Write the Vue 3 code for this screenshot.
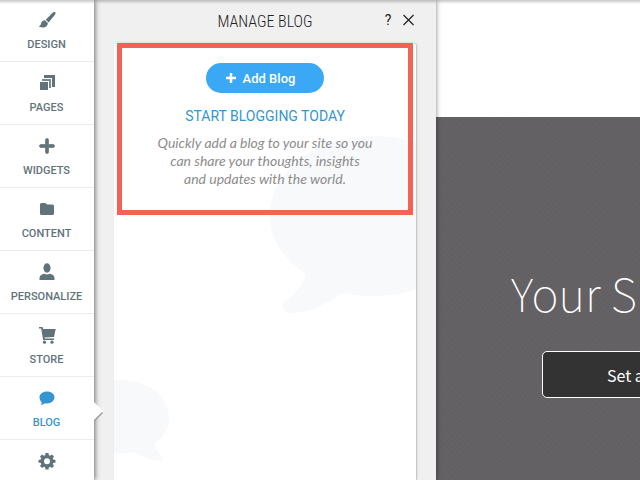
<script setup>
const items = [
  { id: 'design', label: 'DESIGN' },
  { id: 'pages', label: 'PAGES' },
  { id: 'widgets', label: 'WIDGETS' },
  { id: 'content', label: 'CONTENT' },
  { id: 'personalize', label: 'PERSONALIZE' },
  { id: 'store', label: 'STORE' },
  { id: 'blog', label: 'BLOG', active: true },
  { id: 'settings', label: '' },
]
</script>

<template>
  <div class="shell">
    <nav class="sidebar" aria-label="Editor">
      <a v-for="item in items" :key="item.id" href="#" class="nav-item" :class="{ active: item.active }" :aria-label="item.id">
        <svg class="nav-icon" viewBox="0 0 18 18" aria-hidden="true">
          <g v-if="item.id === 'design'">
            <path d="M16.900 1.100c.9.600.8 1.500.2 2.300L10.700 11.400 7.700 8.700l6.900-6.900c.8-.8 1.500-1.200 2.300-.7z" />
            <path d="M7.100 9.400l2.800 2.500c-.1 3.900-4.100 6-9.400 3.300 2.200-.4 2.200-1.900 2.700-3.300.6-1.700 2.200-2.700 3.900-2.500z" />
          </g>
          <g v-else-if="item.id === 'pages'">
            <path d="M2 8h8v8H2z" />
            <path d="M4 5h9v9h-2V7H4z" opacity=".85" />
            <path d="M6 1h11v12h-3V4H6z" />
          </g>
          <path v-else-if="item.id === 'widgets'" d="M7.500 3a1.500 1.500 0 0 1 3 0v4.500H15a1.500 1.500 0 0 1 0 3h-4.500V15a1.500 1.500 0 0 1-3 0v-4.500H3a1.500 1.500 0 0 1 0-3h4.500z" stroke="currentColor" stroke-width=".7" />
          <path v-else-if="item.id === 'content'" d="M2 4.500A1.500 1.500 0 0 1 3.500 3h3.700l2 1.500h5.300A1.500 1.500 0 0 1 16 6v7.500a1.500 1.500 0 0 1-1.500 1.500h-11A1.500 1.500 0 0 1 2 13.500z" />
          <g v-else-if="item.id === 'personalize'">
            <ellipse cx="9" cy="5" rx="3.600" ry="4.700" />
            <path d="M1.500 17v-2c0-2.600 2.400-3.900 5-4.300 1.600 1 3.400 1 5 0 2.600.4 5 1.700 5 4.300v2z" />
          </g>
          <g v-else-if="item.id === 'store'">
            <path d="M1 1h3.600l.7 1.900h12.400l-1.700 8-9.500.6.300 1H16v1.500H5.100L3.200 2.600H1z" />
            <circle cx="6.500" cy="16.200" r="1.600" />
            <circle cx="14" cy="16.200" r="1.600" />
          </g>
          <path v-else-if="item.id === 'blog'" d="M9 2.500c4.400 0 7.500 2.500 7.500 5.800S13.400 14.500 9 14.500c-.8 0-1.500 0-2.200-.2C5.600 15.300 4.300 15.800 2.500 15.800c.9-.7 1.200-1.600 1.200-2.600C2.300 12 1.500 10.400 1.500 8.500 1.500 5 4.600 2.500 9 2.500z" />
          <path v-else fill-rule="evenodd" d="M7.500 1h3l.4 2.300 1.200.5L14 2.500 16 4.500l-1.300 1.900.5 1.200 2.300.4v2.500l-2.300.4-.5 1.200L16 14l-2 2-1.900-1.300-1.200.5-.4 2.300h-3l-.4-2.300-1.200-.5L4 16l-2-2 1.300-1.900-.5-1.200L.5 10.500V8l2.300-.4.5-1.200L2 4.500l2-2 1.900 1.300 1.200-.5zM9 6.300a3 3 0 1 0 0 6 3 3 0 0 0 0-6z" />
        </svg>
        <span class="nav-label">{{ item.label }}</span>
        <svg v-if="item.active" class="pointer" viewBox="0 0 12 22" aria-hidden="true">
          <path d="M0 3l9 9-9 9" class="pointer-shade" />
          <path d="M0 1l9 9-9 9z" class="pointer-fill" />
        </svg>
      </a>
    </nav>

    <section class="panel">
      <header class="panel-head">
        <h1 class="panel-title">MANAGE BLOG</h1>
        <div class="panel-actions">
          <button type="button" class="icon-button help" aria-label="Help">?</button>
          <button type="button" class="icon-button" aria-label="Close">
            <svg class="close-icon" viewBox="0 0 12 12" aria-hidden="true"><path d="M1 1l10 10M11 1L1 11" /></svg>
          </button>
        </div>
      </header>
      <div class="card">
        <svg class="bubble bubble-large" viewBox="0 0 210 180" aria-hidden="true">
          <path d="M104 0c58 0 104 36 104 80s-46 80-104 80c-12 0-22-1-32-3-16 12-34 19-51 20-7 0-11-6-6-12 11-7 18-16 21-27C14 124 0 104 0 80 0 36 46 0 104 0z" />
        </svg>
        <svg class="bubble bubble-small" viewBox="0 0 104 82" aria-hidden="true">
          <path d="M48 0c30 0 50 16 50 37 0 11-5 20-15 27 1 5 4 8 8 12 3 3 1 5-3 5-9-1-17-4-24-9-5 1-10 1-16 1C20 73 0 57 0 37S20 0 48 0z" />
        </svg>
        <div class="callout">
          <button type="button" class="add-button">
            <svg class="add-icon" viewBox="0 0 12 12" aria-hidden="true"><path d="M6 1v10M1 6h10" /></svg>
            <span>Add Blog</span>
          </button>
          <h2 class="callout-title">START BLOGGING TODAY</h2>
          <p class="callout-text">Quickly add a blog to your site so you<br>can share your thoughts, insights<br>and updates with the world.</p>
        </div>
      </div>
    </section>

    <main class="preview">
      <div class="hero">
        <h2 class="hero-title">Your S</h2>
        <button type="button" class="hero-button">Set a</button>
      </div>
    </main>
  </div>
</template>

<style>
body {
  background: #fff;
}
</style>

<style scoped>
.shell {
  position: relative;
  display: flex;
  height: 100vh;
  overflow: hidden;
  font-family: Roboto, "Liberation Sans", sans-serif;
}
.shell::after {
  content: "";
  position: absolute;
  inset: 0 0 auto;
  z-index: 4;
  height: 4px;
  background: linear-gradient(rgba(0, 0, 0, 0.22), rgba(0, 0, 0, 0));
  pointer-events: none;
}
.sidebar {
  position: relative;
  z-index: 3;
  flex: none;
  width: 94px;
  background: #fff;
  box-shadow: 1px 0 5px rgba(0, 0, 0, 0.55);
}
.nav-item {
  position: relative;
  display: flex;
  flex-direction: column;
  align-items: center;
  gap: 8px;
  box-sizing: border-box;
  height: 63px;
  padding: 12px 1px 0 0;
  border-bottom: 1px solid #ececec;
  color: #61737a;
  text-decoration: none;
}
.nav-item:first-child {
  height: 62px;
  padding-top: 11px;
}
.nav-item.active {
  color: #3595cf;
}
.nav-icon {
  width: 18px;
  height: 18px;
  fill: currentColor;
}
.nav-label {
  font-size: 11px;
  line-height: 16px;
  font-weight: 500;
}
.pointer {
  position: absolute;
  top: 24px;
  left: 100%;
  width: 12px;
  height: 22px;
}
.pointer-shade {
  fill: #999;
}
.pointer-fill {
  fill: #fff;
}
.panel {
  position: relative;
  z-index: 2;
  display: flex;
  flex-direction: column;
  flex: none;
  box-sizing: border-box;
  width: 342px;
  padding: 0 20px;
  background: #f0f0f0;
  box-shadow: 0 0 5px rgba(0, 0, 0, 0.5);
}
.panel-head {
  display: grid;
  grid-template-columns: 1fr auto 1fr;
  align-items: center;
  height: 43px;
  box-sizing: border-box;
}
.panel-title {
  grid-column: 2;
  margin: 0;
  font-family: "Roboto Condensed", "Noto Sans CJK SC", sans-serif;
  font-size: 16px;
  line-height: 20px;
  font-weight: 300;
  color: #222;
}
.panel-actions {
  display: flex;
  justify-content: flex-end;
  align-items: center;
  gap: 7px;
  padding-bottom: 3px;
}
.icon-button {
  display: flex;
  align-items: center;
  justify-content: center;
  padding: 0;
  border: 0;
  background: none;
  color: #222;
}
.help {
  width: 12px;
  font-family: Roboto, sans-serif;
  font-size: 14px;
  line-height: 16px;
}
.close-icon {
  width: 15px;
  height: 12px;
  fill: none;
  stroke: currentColor;
  stroke-width: 1.2;
}
.card {
  position: relative;
  flex: 1;
  padding: 0 3px;
  overflow: hidden;
  background: #fff;
  border-radius: 3px 3px 0 0;
  box-shadow: 1px 0 2px rgba(0, 0, 0, 0.22);
}
.bubble {
  position: absolute;
  fill: #f7f9fb;
}
.bubble-large {
  top: 93px;
  left: 156px;
  width: 210px;
  height: 180px;
}
.bubble-small {
  top: 337px;
  left: -43px;
  width: 104px;
  height: 82px;
}
.callout {
  position: relative;
  display: flex;
  flex-direction: column;
  align-items: center;
  box-sizing: border-box;
  height: 172px;
  padding-top: 15px;
  border: 5px solid #f36355;
}
.add-button {
  display: flex;
  align-items: center;
  justify-content: center;
  gap: 6px;
  width: 118px;
  height: 30px;
  padding: 0 10px 0 0;
  border: 0;
  border-radius: 15px;
  background: #3aa8f4;
  color: #fff;
  font-family: Roboto, sans-serif;
  font-size: 13px;
  font-weight: 500;
}
.add-icon {
  width: 12px;
  height: 12px;
  fill: none;
  stroke: currentColor;
  stroke-width: 2.5;
}
.callout-title {
  margin: 13px 0 8px;
  font-size: 14px;
  line-height: 20px;
  font-weight: 400;
  color: #3595cf;
}
.callout-text {
  margin: 0;
  font-family: Lato, sans-serif;
  font-size: 14px;
  line-height: 18px;
  font-style: italic;
  text-align: center;
  color: #8c8c8c;
  white-space: nowrap;
}
.preview {
  flex: 1;
  display: flex;
  flex-direction: column;
  min-width: 0;
  padding-top: 117px;
  overflow: hidden;
  background: #fff;
}
.hero {
  flex: 1;
  padding: 145px 0 0 75px;
  background-color: #636164;
  background-image:
    repeating-linear-gradient(45deg, rgba(255, 255, 255, 0.015) 0 1px, transparent 1px 4px),
    repeating-linear-gradient(-45deg, rgba(0, 0, 0, 0.015) 0 1px, transparent 1px 4px);
}
.hero-title {
  margin: 0;
  font-family: "Noto Sans CJK SC", sans-serif;
  font-size: 46px;
  line-height: 60px;
  font-weight: 100;
  color: #fff;
  white-space: nowrap;
}
.hero-button {
  display: block;
  box-sizing: border-box;
  width: 200px;
  height: 47px;
  margin: 29px 0 0 31px;
  padding: 0 64px;
  border: 1px solid #fff;
  border-radius: 5px;
  background: #333;
  color: #fff;
  font-family: "Noto Sans CJK SC", sans-serif;
  font-size: 16px;
  text-align: left;
  white-space: nowrap;
}
</style>
